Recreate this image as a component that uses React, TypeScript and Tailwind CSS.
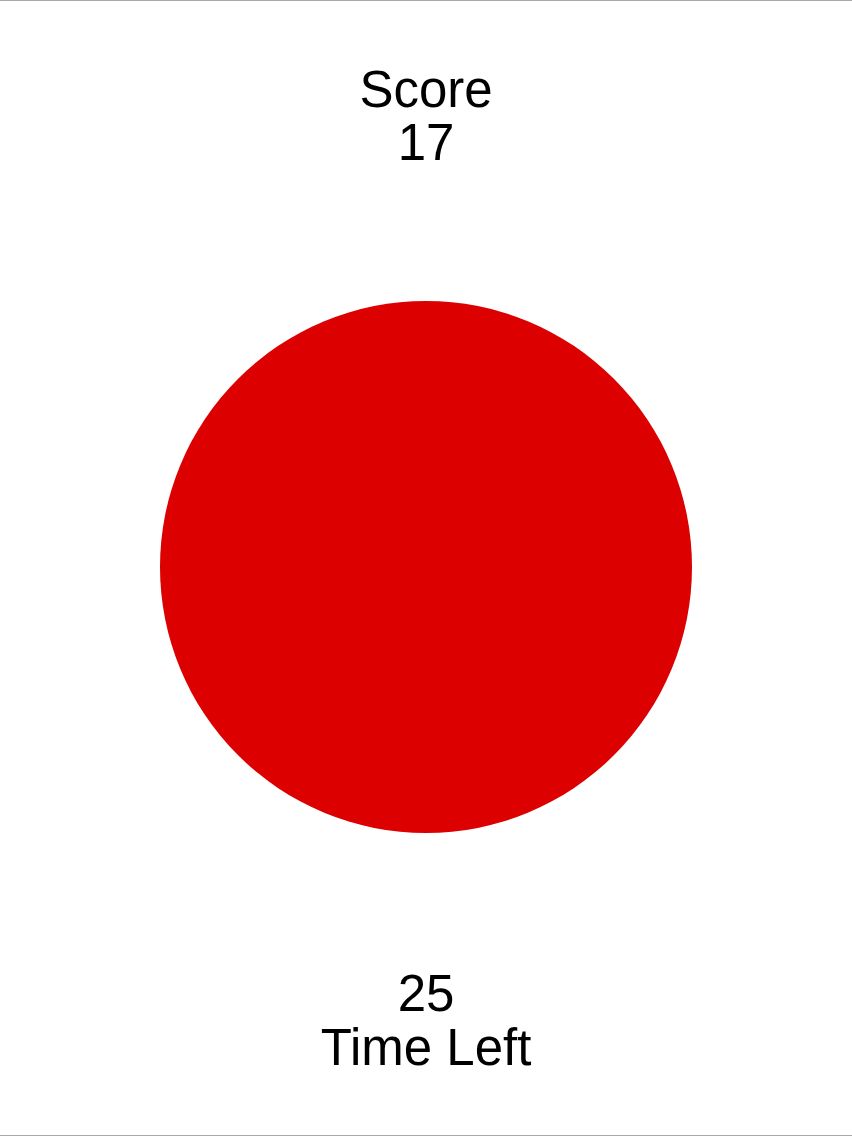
export default function App() {
  return (
    <div
      className="flex h-[1136px] w-full flex-col items-center border-y border-[#a9a9a9] bg-white text-black"
      style={{ fontFamily: '"Liberation Sans", Arial, sans-serif' }}
    >
      {/* score readout */}
      <div className="mt-[62px] flex flex-col items-center text-[51px] leading-[53px]">
        <span>Score</span>
        <span>17</span>
      </div>

      {/* tap target */}
      <button
        type="button"
        className="mt-[132px] h-[532px] w-[532px] shrink-0 rounded-full bg-[#dd0000]"
        aria-label="Tap"
      />

      {/* countdown */}
      <div className="mt-[134px] flex flex-col items-center text-[51px] leading-[54px]">
        <span>25</span>
        <span>Time Left</span>
      </div>
    </div>
  );
}
